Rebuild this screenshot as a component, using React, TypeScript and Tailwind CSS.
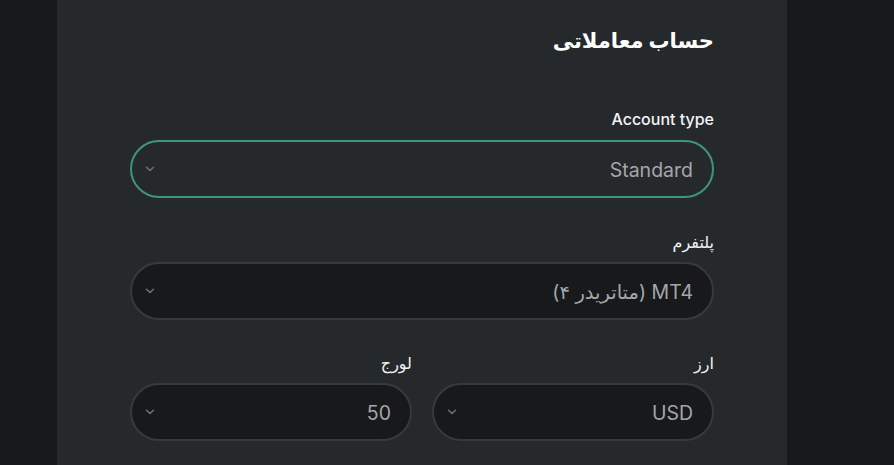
import React from "react";

const font = { fontFamily: 'Inter, "Noto Sans", "DejaVu Sans", sans-serif' };

function Chevron() {
  return (
    <svg width="10" height="6" viewBox="0 0 10 6" fill="none" className="shrink-0">
      <path d="M1.5 1.2 5 4.6 8.5 1.2" stroke="#6f7378" strokeWidth="1.4" strokeLinecap="round" strokeLinejoin="round" />
    </svg>
  );
}

function Select({ value, active = false }: { value: string; active?: boolean }) {
  return (
    <div
      dir="ltr"
      className={
        active
          ? "flex h-[58px] items-center justify-between rounded-full border-2 border-[#3f9676] bg-[#26292c] pl-[13px] pr-[19px]"
          : "flex h-[58px] items-center justify-between rounded-full border-2 border-[#36393d] bg-[#18191b] pl-[13px] pr-[19px]"
      }
    >
      <Chevron />
      <span dir="rtl" className="pt-[4px] text-[19.5px] text-[#a3a7ab]">
        {value}
      </span>
    </div>
  );
}

function Field({ label, value, active }: { label: string; value: string; active?: boolean }) {
  return (
    <div className="flex flex-col">
      <div dir="rtl" className="mb-[10px] h-5 text-[16px] font-medium leading-5 text-[#f2f3f4]">
        {label}
      </div>
      <Select value={value} active={active} />
    </div>
  );
}

export default function App() {
  return (
    <div className="flex h-[465px] w-[894px] overflow-hidden bg-[#18191b]" style={font}>
      <div className="w-[57px] shrink-0" />
      <div className="flex w-[730px] shrink-0 flex-col bg-[#26292c] px-[73px] pt-[27px]">
        <h1 dir="rtl" className="h-7 text-[21px] font-bold leading-7 text-white">
          حساب معاملاتی
        </h1>
        <div className="mt-[54px]">
          <div dir="rtl" className="mb-[11px] h-5 text-right text-[16px] font-medium leading-5 text-[#f2f3f4]">
            Account type
          </div>
          <Select value="Standard" active />
        </div>
        <div className="mt-[34px]">
          <Field label="پلتفرم" value="MT4 (متاتریدر ۴)" />
        </div>
        <div dir="rtl" className="mt-[33px] grid grid-cols-2 gap-x-5">
          <Field label="ارز" value="USD" />
          <Field label="لورج" value="50" />
        </div>
      </div>
      <div className="flex-1" />
    </div>
  );
}
